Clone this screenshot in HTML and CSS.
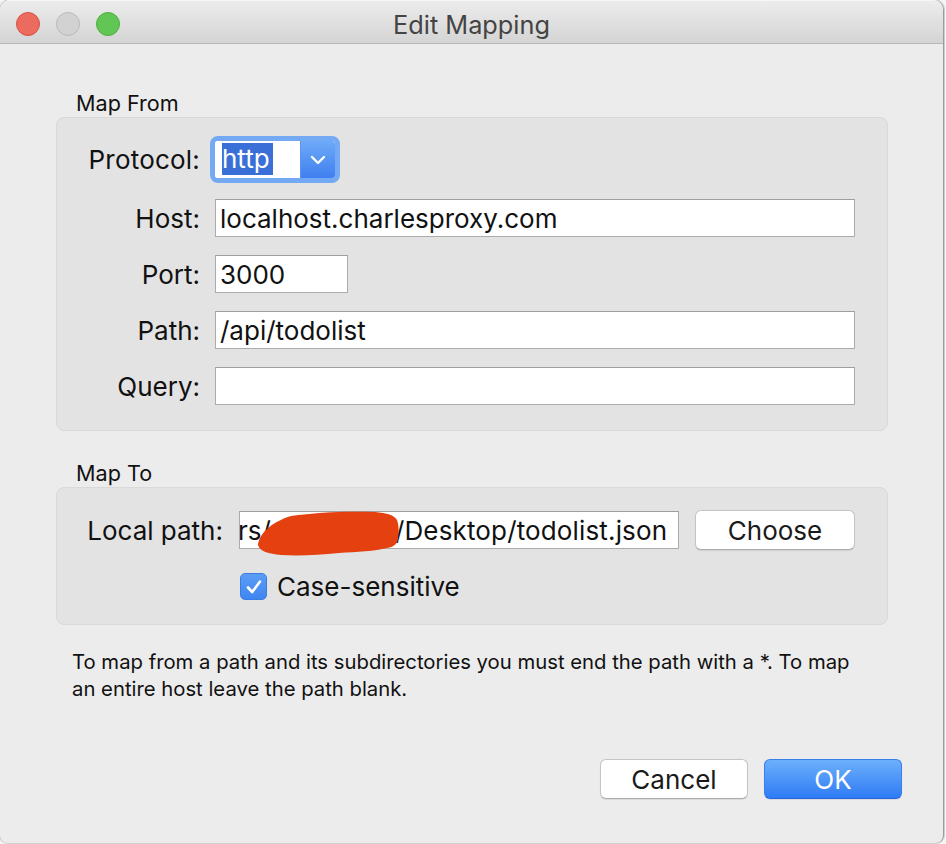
FILE: index.html
```html
<!DOCTYPE html>
<html>
<head>
<meta charset="utf-8">
<title>Edit Mapping</title>
<link rel="stylesheet" href="styles.css">
</head>
<body>
<div class="window">
  <div class="titlebar">
    <div class="lights">
      <span class="light red"></span>
      <span class="light gray"></span>
      <span class="light green"></span>
    </div>
    <div class="title">Edit Mapping</div>
  </div>
  <div class="content">
    <div class="group-label first">Map From</div>
    <div class="group from">
      <div class="row row-protocol">
        <label class="lbl">Protocol:</label>
        <div class="select">
          <div class="select-field"><span class="selected">http</span></div>
          <div class="select-btn">
            <svg width="16" height="10" viewBox="0 0 16 10"><path d="M2 2 L8 8 L14 2" fill="none" stroke="#fff" stroke-width="2.4" stroke-linecap="round" stroke-linejoin="round"/></svg>
          </div>
        </div>
      </div>
      <div class="row">
        <label class="lbl">Host:</label>
        <div class="field wide">localhost.charlesproxy.com</div>
      </div>
      <div class="row">
        <label class="lbl">Port:</label>
        <div class="field port">3000</div>
      </div>
      <div class="row">
        <label class="lbl">Path:</label>
        <div class="field wide">/api/todolist</div>
      </div>
      <div class="row">
        <label class="lbl">Query:</label>
        <div class="field wide"></div>
      </div>
    </div>

    <div class="group-label second">Map To</div>
    <div class="group to">
      <div class="row-local">
        <label class="lbl">Local path:</label>
        <div class="local-wrap">
          <div class="field local">
            <span class="cut">rs/</span><span class="redacted">username</span><span class="tail">/Desktop/todolist.json</span>
          </div>
          <svg class="scribble" width="170" height="46" viewBox="0 0 170 46"><path d="M19 34 C20 24 30 12 52 5 C78 1 110 0 136 1 C148 2 155 4 158 9 C160 14 160 22 159 28 C158 33 155 36 148 37 C136 40 118 41 100 42 C80 44 60 45 42 44 C30 43 20 40 19 34 Z" fill="#e5400f"/></svg>
        </div>
        <button class="btn choose">Choose</button>
      </div>
      <div class="row-check">
        <span class="checkbox">
          <svg width="18" height="16" viewBox="0 0 18 16"><path d="M3 8.5 L7.2 13 L15 2.5" fill="none" stroke="#fff" stroke-width="2.6" stroke-linecap="round" stroke-linejoin="round"/></svg>
        </span>
        <span class="check-label">Case-sensitive</span>
      </div>
    </div>

    <p class="help">To map from a path and its subdirectories you must end the path with a *. To map<br>an entire host leave the path blank.</p>

    <div class="buttons">
      <button class="btn cancel">Cancel</button>
      <button class="btn ok">OK</button>
    </div>
  </div>
</div>
</body>
</html>
```

FILE: styles.css
```css
html, body {
  margin: 0;
  padding: 0;
}
body {
  width: 946px;
  height: 844px;
  background: #f4f4f4;
  font-family: Inter, "Liberation Sans", sans-serif;
  color: #111;
  overflow: hidden;
}
.window {
  width: 943px;
  height: 843px;
  background: #ececec;
  border-right: 1px solid #9c9c9c;
  border-radius: 10px 10px 8px 8px;
  box-shadow: 0 0 0 1px #cfcfcf;
  overflow: hidden;
  display: flex;
  flex-direction: column;
}
.titlebar {
  height: 44px;
  flex: none;
  background: linear-gradient(#ececec, #d4d4d4);
  border-bottom: 1px solid #b8b8b8;
  border-top: 1px solid #f6f6f6;
  position: relative;
  display: flex;
  align-items: center;
  justify-content: center;
  box-sizing: border-box;
}
.lights {
  position: absolute;
  left: 16px;
  top: 11px;
  display: flex;
  gap: 16px;
}
.light {
  width: 24px;
  height: 24px;
  border-radius: 50%;
  box-sizing: border-box;
}
.red { background: #ec6b5f; border: 1px solid #d65245; }
.gray { background: #d2d2d2; border: 1px solid #bababa; }
.green { background: #62c655; border: 1px solid #4fae40; }
.title {
  font-size: 25.3px;
  color: #444;
  margin-top: 4px;
}
.content {
  padding: 0 56px;
  display: flex;
  flex-direction: column;
}
.group-label {
  font-size: 21.6px;
  line-height: 26px;
  margin-left: 20px;
  color: #111;
}
.group-label.first { margin-top: 46px; margin-bottom: 1px; }
.group-label.second { margin-top: 29px; margin-bottom: 1px; }
.group {
  width: 832px;
  box-sizing: border-box;
  background: #e3e3e3;
  border: 1px solid #d9d9d9;
  border-radius: 8px;
}
.from {
  height: 314px;
  padding: 18px 0 0 0;
  display: flex;
  flex-direction: column;
  gap: 18px;
}
.row {
  display: grid;
  grid-template-columns: 143px auto;
  column-gap: 15px;
  align-items: center;
  height: 38px;
}
.row-protocol {
  height: 47px;
  margin-bottom: -2px;
}
.lbl {
  font-size: 26px;
  text-align: right;
  color: #111;
  white-space: nowrap;
}
.row-protocol .lbl {
  letter-spacing: 0.2px;
}
.field {
  height: 38px;
  box-sizing: border-box;
  background: #fff;
  border: 1px solid #ababab;
  border-top-color: #9f9f9f;
  font-size: 26px;
  line-height: 37px;
  padding: 0 4px;
  color: #111;
  white-space: nowrap;
  overflow: hidden;
}
.wide { width: 640px; }
.port { width: 133px; }
.select {
  width: 130px;
  height: 47px;
  box-sizing: border-box;
  border: 5px solid #74aaf3;
  border-radius: 8px;
  margin-left: -5px;
  display: flex;
  overflow: hidden;
  background: #fff;
}
.select-field {
  width: 85px;
  background: #fff;
  padding: 2px 0 0 7px;
  box-sizing: border-box;
  font-size: 26px;
  line-height: 32px;
}
.selected {
  background: #3b6fd8;
  color: #fff;
  display: inline-block;
  padding: 0 3px 0 0;
  line-height: 32px;
}
.select-btn {
  flex: 1;
  background: linear-gradient(#6eaaf8, #3f7ff0);
  border-left: 1px solid #5d93ea;
  display: flex;
  align-items: center;
  justify-content: center;
}
.to {
  height: 138px;
  padding: 22px 0 0 0;
  display: flex;
  flex-direction: column;
}
.row-local {
  display: flex;
  align-items: center;
  height: 40px;
}
.row-local .lbl {
  width: 166px;
  margin-right: 16px;
}
.local-wrap {
  position: relative;
  width: 440px;
  height: 38px;
}
.local {
  width: 440px;
  padding: 0;
}
.cut {
  display: inline-block;
  margin-left: -2px;
}
.redacted {
  display: inline-block;
  width: 124px;
  overflow: hidden;
  vertical-align: top;
  color: transparent;
}
.tail {
  letter-spacing: 0.15px;
}
.scribble {
  position: absolute;
  left: 0;
  top: 0;
}
.btn {
  font-family: Inter, "Liberation Sans", sans-serif;
  font-size: 26px;
  color: #1a1a1a;
  background: #fff;
  border: 1px solid #c4c4c4;
  border-bottom-color: #ababab;
  border-radius: 6px;
  box-shadow: 0 1px 1px rgba(0,0,0,0.08);
  padding: 0;
  cursor: default;
}
.choose {
  width: 160px;
  height: 40px;
  margin-left: 16px;
}
.row-check {
  display: flex;
  align-items: center;
  margin-top: 21px;
  margin-left: 183px;
  gap: 10px;
}
.checkbox {
  width: 27px;
  height: 27px;
  border-radius: 5px;
  background: linear-gradient(#5b9cf5, #3f86f1);
  border: 1px solid #3a7ce0;
  box-sizing: border-box;
  display: flex;
  align-items: center;
  justify-content: center;
}
.check-label {
  font-size: 26px;
  color: #111;
}
.help {
  font-size: 20.3px;
  line-height: 27px;
  margin: 23px 0 0 16px;
  color: #111;
}
.buttons {
  display: flex;
  justify-content: flex-end;
  gap: 16px;
  margin-top: 57px;
  margin-right: -15px;
}
.cancel {
  width: 148px;
  height: 40px;
}
.ok {
  width: 138px;
  height: 40px;
  color: #fff;
  background: linear-gradient(#6cb0fb, #2f7bf5);
  border: 1px solid #3a7ff0;
  border-bottom-color: #2563df;
}
```
